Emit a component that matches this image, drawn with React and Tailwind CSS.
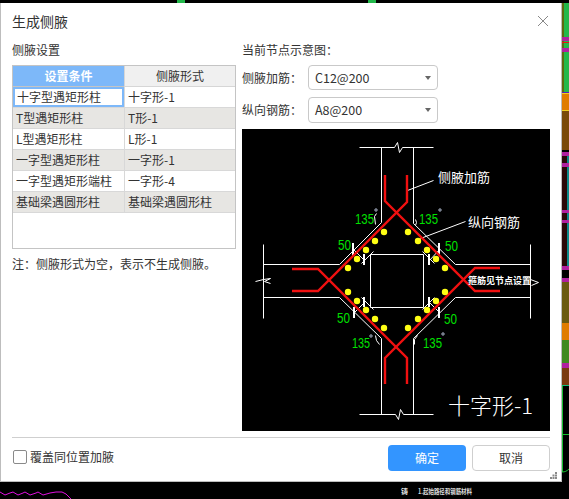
import { useState } from "react";

const rows = [
  ["十字型遇矩形柱", "十字形-1"],
  ["T型遇矩形柱", "T形-1"],
  ["L型遇矩形柱", "L形-1"],
  ["一字型遇矩形柱", "一字形-1"],
  ["一字型遇矩形端柱", "一字形-4"],
  ["基础梁遇圆形柱", "基础梁遇圆形柱"],
];

const dots = [
  [384, 232], [375, 241], [366, 250], [357, 259], [348, 268],
  [408, 232], [418, 241], [427, 250], [436, 259], [445, 268],
  [348, 292], [357, 301], [366, 310], [375, 319], [384, 328],
  [408, 328], [418, 319], [427, 310], [436, 301], [445, 292],
];

const thinLines = [
  // column and beam outlines
  "M359 147H394L397 142L399 152L402 147H433",
  "M381 147V222L339 264H263",
  "M413 147V223L455 264H530",
  "M263 244V318",
  "M530 244V318",
  "M263 297H339L381 338V414",
  "M530 297H455L413 338V414",
  "M359 414H395L398 419L400 409L403 414H433",
  // center square
  "M370 254H423V307H370Z",
  // break marks
  "M255 281L263 279L270 278L264 281L270 283",
  "M530 279L538 282L531 285",
  // leaders
  "M407 190L433 180",
  "M420 238L465 221",
  // dimension slashes
  "M353 249L364 260",
  "M361 263L373 251",
  "M429 260L439 249",
  "M422 251L434 263",
  "M354 312L364 302",
  "M361 297L373 309",
  "M429 302L439 312",
  "M434 297L422 309",
  // angle ticks
  "M376 213L374 216L375 224",
  "M415 219L416 222L415 225",
  "M375 335L376 340L379 344",
  "M417 335L414 339L414 344",
];

const ticks = [
  [353, 243, 256], [364, 254, 265], [429, 254, 265], [439, 243, 255],
  [364, 297, 307], [354, 307, 318], [429, 297, 307], [439, 307, 318],
];

const greens = [
  ["135", 355, 224, 19], ["50", 338, 250, 13], ["135", 419, 224, 19], ["50", 445, 251, 13],
  ["50", 337, 323, 13], ["135", 352, 348, 18], ["50", 444, 324, 13], ["135", 423, 348, 19],
];

function Diagram() {
  return (
    <svg viewBox="242 129 308 302" className="block w-[308px] h-[302px] mt-[6px] bg-black">
      <g fill="none" stroke="#fff" strokeWidth="1" transform="translate(0.5 0.5)">
        {thinLines.map((d) => (
          <path key={d} d={d} />
        ))}
      </g>
      <g stroke="#fff" strokeWidth="2">
        {ticks.map(([x, y1, y2]) => (
          <line key={x + "-" + y1} x1={x} x2={x} y1={y1} y2={y2} />
        ))}
      </g>
      <g fill="none" stroke="#f01010" strokeWidth="2.4">
        <path d="M385 175V201L475 291H500" />
        <path d="M407 175V202L318 291H292" />
        <path d="M292 269H318L407 358V384" />
        <path d="M500 268H475L385 358V384" />
      </g>
      <g fill="#ffff14">
        {dots.map(([x, y]) => (
          <circle key={x + "-" + y} cx={x} cy={y} r="3.2" />
        ))}
      </g>
      <g fill="#00e000" className="font-['Liberation_Sans',sans-serif] text-[14px]">
        {greens.map(([t, x, y, w]) => (
          <text key={x + "-" + y} x={x} y={y} textLength={w} lengthAdjust="spacingAndGlyphs">
            {t}
          </text>
        ))}
      </g>
      <g fill="none" stroke="#d8e4ff" strokeWidth="0.8">
        <circle cx="376" cy="210" r="1.2" />
        <circle cx="440" cy="210" r="1.2" />
        <circle cx="371" cy="336" r="1.2" />
        <circle cx="443" cy="334" r="1.2" />
      </g>
      <g fill="#fff">
        <text x="438" y="182" className="text-[13px]">侧腋加筋</text>
        <text x="468" y="227" className="text-[13px]">纵向钢筋</text>
        <text x="468" y="284" className="text-[9px] font-bold">箍筋见节点设置</text>
        <text x="448" y="414" textLength="85" lengthAdjust="spacing" className="text-[22px] font-light">
          十字形-1
        </text>
      </g>
    </svg>
  );
}

function FakeSelect({ value, className }) {
  return (
    <div className={"w-[130px] border border-[#c9c9c9] rounded-[4px] flex items-center justify-between pl-[6px] pr-[6px] text-[12.5px] text-[#333] " + className}>
      <span>{value}</span>
      <span className="w-0 h-0 border-x-[3px] border-x-transparent border-t-[4px] border-t-[#666]" />
    </div>
  );
}

function RightStrip() {
  return (
    <svg viewBox="0 0 7 479" preserveAspectRatio="none" className="block w-[7px] h-[479px] shrink-0">
      <rect width="7" height="479" fill="#000" />
      <rect y="0" width="7" height="89" fill="#22b84a" />
      <rect y="0" width="2" height="89" fill="#5c6a10" />
      <rect y="34" width="7" height="4" fill="#b020a0" />
      <rect y="45" width="7" height="4" fill="#b020a0" />
      <rect y="39" width="7" height="1" fill="#f01010" />
      <rect y="89" width="7" height="1" fill="#5020c0" />
      <rect y="90" width="7" height="17" fill="#e07c00" />
      <rect y="90" width="7" height="1" fill="#f0d020" />
      <rect y="107" width="7" height="1" fill="#f0d020" />
      <rect y="108" width="7" height="39" fill="#7a4a08" />
      <rect y="149" width="7" height="4" fill="#b020a0" />
      <rect y="153" width="7" height="110" fill="#2a0808" />
      <rect y="153" x="5" width="2" height="110" fill="#0a8a8a" />
      <rect y="160" width="7" height="4" fill="#b020a0" />
      <rect y="207" width="7" height="3" fill="#b020a0" />
      <rect y="217" width="7" height="3" fill="#b020a0" />
      <rect y="263" width="7" height="4" fill="#b020a0" />
      <rect y="275" width="7" height="4" fill="#b020a0" />
      <rect y="279" width="7" height="41" fill="#6a5a10" />
      <rect y="320" width="7" height="17" fill="#e07c00" />
      <rect y="337" width="7" height="23" fill="#3f8a20" />
      <rect y="360" width="7" height="5" fill="#b020a0" />
      <rect y="365" width="7" height="17" fill="#7a3a10" />
      <rect y="382" width="7" height="1" fill="#10c080" />
      <rect x="0" y="383" width="1" height="86" fill="#18c030" />
      <rect x="0" y="431" width="7" height="1" fill="#18c030" />
      <path d="M0 469C3 469 5 468 7 466" fill="none" stroke="#18c030" />
    </svg>
  );
}

function BottomStrip() {
  return (
    <svg viewBox="0 0 569 17" className="block w-[569px] h-[17px] shrink-0 bg-black">
      <path
        d="M0 10L5 13L10 11L13 10L18 13L23 11L25 10L30 13L36 11L38 10L43 13L50 11L56 10L62 10L66 12L71 17"
        fill="none"
        stroke="#e010e0"
        strokeWidth="1"
      />
      <g fill="#ddd" className="font-bold text-[7px]">
        <text x="401" y="12">铸</text>
        <text x="418" y="12" textLength="54" lengthAdjust="spacingAndGlyphs">1.起始路径和钢筋材料</text>
      </g>
    </svg>
  );
}

export default function App() {
  const [cover, setCover] = useState(false);

  return (
    <div className="w-[569px] h-[499px] bg-black overflow-hidden flex flex-col font-['Noto_Sans_CJK_SC','Noto_Sans',sans-serif]">
      {/* TOP STRIP */}
      <div className="h-[3px] shrink-0 flex">
        <div className="w-[177px]" />
        <div className="w-[8px] bg-[#22b84a]" />
        <div className="w-[183px]" />
        <div className="w-[8px] bg-[#22b84a]" />
      </div>

      <div className="flex h-[479px] shrink-0">
        {/* DIALOG */}
        <div className="relative w-[562px] h-[479px] bg-white border-l border-b border-r border-[#bdbdbd] pl-[11px] pr-[11px] text-[12px] text-[#333] leading-[18px]">
          <div className="h-[38px] pb-[2px] flex items-center justify-between text-[14px]">
            <span>生成侧腋</span>
            <svg viewBox="0 0 12 12" className="w-[12px] h-[12px] mr-[1px]" fill="none" stroke="#888" strokeWidth="1">
              <path d="M1 1L11 11M11 1L1 11" />
            </svg>
          </div>

          <div className="flex gap-[6px]">
            {/* LEFT */}
            <div className="w-[224px] shrink-0">
              <div className="h-[18px]">侧腋设置</div>
              <div className="mt-[6px] h-[184px] border border-[#c4c4c4]">
                <div className="grid grid-cols-[111px_111px] h-[21px] leading-[20px] text-center">
                  <div className="bg-[#7db8f9] text-white font-bold border-b border-[#c4c4c4]">设置条件</div>
                  <div className="bg-[#f0f0f0] border-l border-b border-[#d6d6d6]">侧腋形式</div>
                </div>
                {rows.map((r, i) => (
                  <div
                    key={r[0]}
                    className={
                      "grid grid-cols-[111px_111px] h-[21px] leading-[19px] border-b border-[#d8d8d8] " +
                      (i % 2 === 1 ? "bg-[#e7e6e3]" : "bg-white")
                    }
                  >
                    <div className={i === 0 ? "pl-[2px] border-2 border-[#7db8f9] leading-[16px]" : "pl-[3px]"}>{r[0]}</div>
                    <div className="pl-[3px] border-l border-[#d8d8d8]">{r[1]}</div>
                  </div>
                ))}
              </div>
              <div className="mt-[6px] h-[18px]">注：侧腋形式为空，表示不生成侧腋。</div>
            </div>

            {/* RIGHT */}
            <div className="w-[308px] shrink-0">
              <div className="h-[18px]">当前节点示意图：</div>
              <div className="mt-[6px] h-[25px] flex items-center">
                <span className="w-[66px]">侧腋加筋：</span>
                <FakeSelect value="C12@200" className="h-[25px]" />
              </div>
              <div className="mt-[7px] h-[26px] flex items-center">
                <span className="w-[66px]">纵向钢筋：</span>
                <FakeSelect value="A8@200" className="h-[26px]" />
              </div>
              <Diagram />
            </div>
          </div>

          {/* FOOTER */}
          <div className="mt-[6px] border-t border-[#cfcfcf] pt-[7px] flex items-center justify-between">
            <label className="flex items-center gap-[3px] ml-[1px] mb-[2px]">
              <input
                type="checkbox"
                checked={cover}
                onChange={(e) => setCover(e.target.checked)}
                className="appearance-none w-[14px] h-[14px] border border-[#8a8a8a] rounded-[2px] bg-white"
              />
              <span>覆盖同位置加腋</span>
            </label>
            <div className="flex gap-[6px]">
              <button className="w-[78px] h-[26px] rounded-[4px] bg-[#3395ff] text-white">确定</button>
              <button className="w-[78px] h-[26px] rounded-[4px] border border-[#cfcfcf] bg-white">取消</button>
            </div>
          </div>

          {/* resize grip */}
          <svg viewBox="0 0 7 7" className="absolute right-[4px] bottom-[2px] w-[7px] h-[7px]" fill="#8a8a8a">
            <rect x="5" y="0" width="2" height="2" />
            <rect x="2.5" y="2.5" width="2" height="2" />
            <rect x="5" y="2.5" width="2" height="2" />
            <rect x="0" y="5" width="2" height="2" />
            <rect x="2.5" y="5" width="2" height="2" />
            <rect x="5" y="5" width="2" height="2" />
          </svg>
        </div>

        <RightStrip />
      </div>

      <BottomStrip />
    </div>
  );
}
